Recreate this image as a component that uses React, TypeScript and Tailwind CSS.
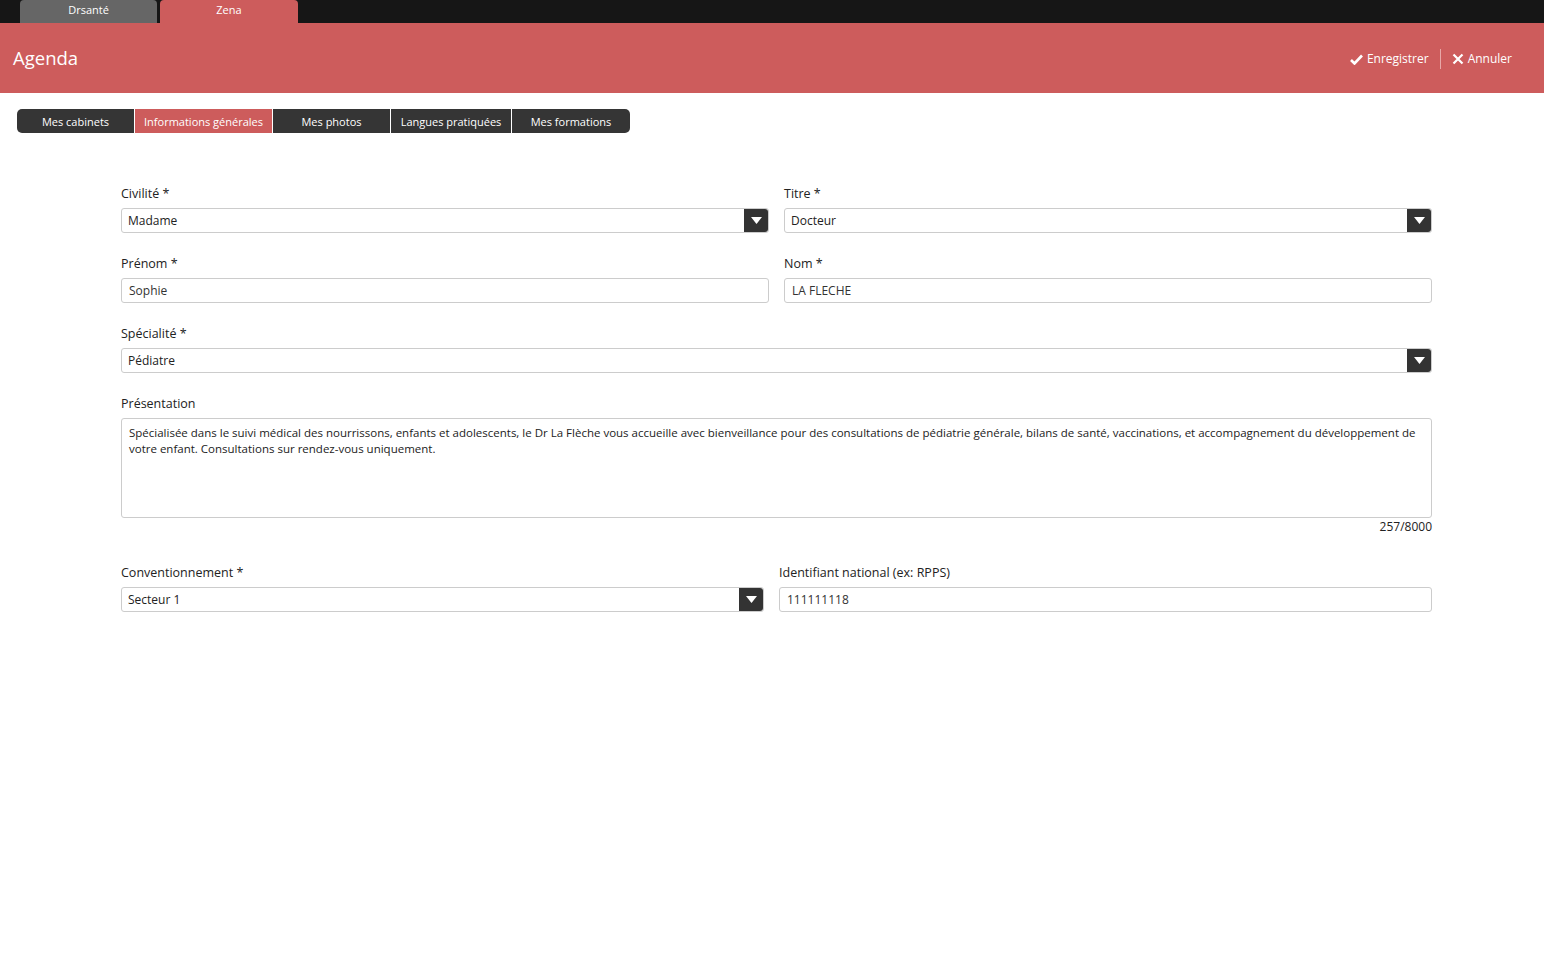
import React, { useState } from 'react';

const font = { fontFamily: '"Open Sans", "Noto Sans", sans-serif' };

const Arrow = () => (
  <div className="flex w-[24px] shrink-0 items-center justify-center rounded-r-[3px] bg-[#333333]">
    <svg width="11" height="7" viewBox="0 0 11 7">
      <path d="M0 0 H11 L5.5 7 Z" fill="#ffffff" />
    </svg>
  </div>
);

const Label = ({ children }: { children: React.ReactNode }) => (
  <div className="mb-[9px] h-[11px] pt-[1px] text-[12.5px] leading-[10px] text-[#222]">{children}</div>
);

const SelectField = ({ value }: { value: string }) => (
  <div className="flex h-[25px] rounded-[3px] border border-[#cccccc] bg-white">
    <div className="flex-1 px-[6px] text-[12px] leading-[23px] text-[#222]">{value}</div>
    <Arrow />
  </div>
);

const TextField = ({ value }: { value: string }) => (
  <div className="h-[25px] rounded-[3px] border border-[#cccccc] bg-white px-[7px] text-[12px] leading-[23px] text-[#333]">
    {value}
  </div>
);

const App = () => {
  const [tab, setTab] = useState('Informations générales');
  const tabs = [
    { name: 'Mes cabinets', w: 'w-[117px]' },
    { name: 'Informations générales', w: 'w-[137px]' },
    { name: 'Mes photos', w: 'w-[117px]' },
    { name: 'Langues pratiquées', w: 'w-[120px]' },
    { name: 'Mes formations', w: 'w-[118px]' },
  ];

  return (
    <div className="min-h-[968px] bg-white" style={font}>
      {/* barre des applications */}
      <div className="flex h-[23px] items-end gap-[3px] bg-[#161616] pl-[20px]">
        <div className="h-[23px] w-[137px] rounded-t-[4px] bg-[#666666] text-center text-[11px] leading-[20px] text-white">
          Drsanté
        </div>
        <div className="h-[23px] w-[138px] rounded-t-[4px] bg-[#cd5c5c] text-center text-[11px] leading-[20px] text-white">
          Zena
        </div>
      </div>

      <header className="flex h-[70px] items-center justify-between bg-[#cd5c5c] pl-[13px] pr-[32px]">
        <h1 className="text-[18.5px] text-white">Agenda</h1>
        <div className="flex items-center pt-[2px] text-[12px] text-white">
          <button className="flex items-center gap-[4px]">
            <svg width="13" height="11" viewBox="0 0 13 11">
              <path d="M1 6 L4.5 9.5 L12 1.5" stroke="#fff" strokeWidth="2.6" fill="none" />
            </svg>
            Enregistrer
          </button>
          <div className="mx-[11px] h-[20px] w-px bg-[#e8a8a8]" />
          <button className="flex items-center gap-[4px]">
            <svg width="12" height="12" viewBox="0 0 12 12">
              <path d="M1.5 1.5 L10.5 10.5 M10.5 1.5 L1.5 10.5" stroke="#fff" strokeWidth="2.2" />
            </svg>
            Annuler
          </button>
        </div>
      </header>

      <nav className="ml-[17px] mt-[16px] flex h-[24px] gap-px">
        {tabs.map((t, i) => (
          <button
            key={t.name}
            onClick={() => setTab(t.name)}
            className={`${t.w} pt-[2px] text-[11px] text-white ${
              tab === t.name ? 'bg-[#cd5c5c]' : 'bg-[#353535]'
            } ${i === 0 ? 'rounded-l-[5px]' : ''} ${i === tabs.length - 1 ? 'rounded-r-[5px]' : ''}`}
          >
            {t.name}
          </button>
        ))}
      </nav>

      <main className="ml-[121px] mr-[112px] mt-[55px]">
        <div className="grid grid-cols-2 gap-x-[15px]">
          <div>
            <Label>Civilité *</Label>
            <SelectField value="Madame" />
          </div>
          <div>
            <Label>Titre *</Label>
            <SelectField value="Docteur" />
          </div>
        </div>

        <div className="mt-[25px] grid grid-cols-2 gap-x-[15px]">
          <div>
            <Label>Prénom *</Label>
            <TextField value="Sophie" />
          </div>
          <div>
            <Label>Nom *</Label>
            <TextField value="LA FLECHE" />
          </div>
        </div>

        <div className="mt-[25px]">
          <Label>Spécialité *</Label>
          <SelectField value="Pédiatre" />
        </div>

        <div className="mt-[25px]">
          <Label>Présentation</Label>
          <div className="h-[100px] rounded-[3px] border border-[#cccccc] px-[7px] py-[6px] text-[11.5px] leading-[16px] text-[#222]">
            Spécialisée dans le suivi médical des nourrissons, enfants et adolescents, le Dr La Flèche vous accueille
            avec bienveillance pour des consultations de pédiatrie générale, bilans de santé, vaccinations, et
            accompagnement du développement de votre enfant. Consultations sur rendez-vous uniquement.
          </div>
          <div className="mt-[2px] text-right text-[12px] leading-[14px] text-[#222]">257/8000</div>
        </div>

        <div className="mt-[33px] flex gap-[15px]">
          <div className="w-[643px]">
            <Label>Conventionnement *</Label>
            <SelectField value="Secteur 1" />
          </div>
          <div className="flex-1">
            <Label>Identifiant national (ex: RPPS)</Label>
            <TextField value="111111118" />
          </div>
        </div>
      </main>
    </div>
  );
};

export default App;
